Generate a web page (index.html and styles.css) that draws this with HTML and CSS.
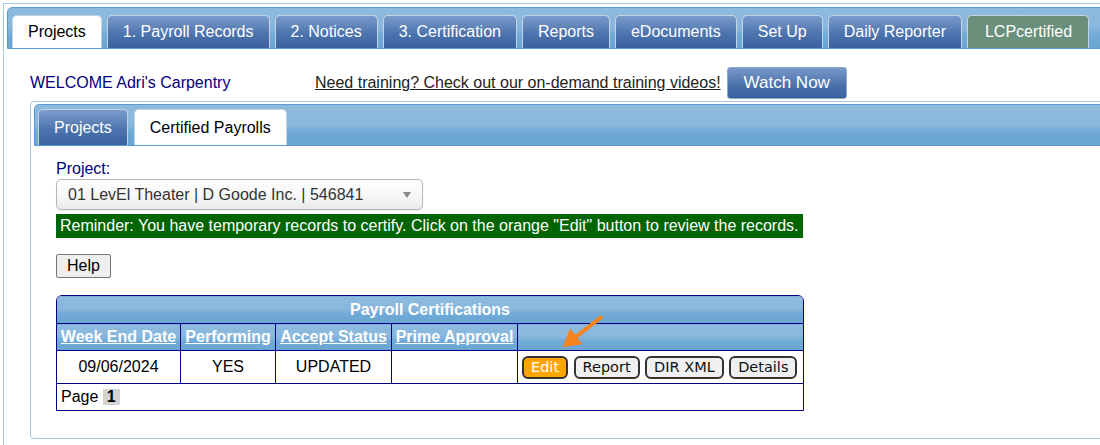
FILE: index.html
```html
<!DOCTYPE html>
<html lang="en">

<head>
  <meta charset="UTF-8">
  <meta name="viewport" content="width=device-width, initial-scale=1.0">
  <title>Certified Payrolls</title>

  <link rel="stylesheet" href="styles.css">
</head>

<body>
  <div class="frame">
    <ul class="tabs main-tabs">
      <li class="tab active">Projects</li>
      <li class="tab">1. Payroll Records</li>
      <li class="tab">2. Notices</li>
      <li class="tab">3. Certification</li>
      <li class="tab">Reports</li>
      <li class="tab">eDocuments</li>
      <li class="tab">Set Up</li>
      <li class="tab">Daily Reporter</li>
      <li class="tab lcp">LCPcertified</li>
    </ul>

    <div class="welcome">
      <span class="greet">WELCOME Adri's Carpentry</span>
      <a href="#" class="training">Need training? Check out our on-demand training videos!</a>
      <button type="button" class="watch">Watch Now</button>
    </div>

    <div class="panel">
      <ul class="tabs sub-tabs">
        <li class="tab">Projects</li>
        <li class="tab active">Certified Payrolls</li>
      </ul>

      <div class="panel-body">
        <label class="field-label" for="project">Project:</label>
        <div class="select-wrap">
          <select id="project">
            <option>01 LevEl Theater | D Goode Inc. | 546841</option>
          </select>
        </div>

        <div class="reminder">
          <span>Reminder: You have temporary records to certify. Click on the orange "Edit" button to review the records.</span>
        </div>

        <button type="button" class="help">Help</button>

        <div class="cert">
          <div class="grid">
            <table>
              <colgroup>
                <col style="width: 124px">
                <col style="width: 95px">
                <col style="width: 116px">
                <col style="width: 126px">
                <col>
              </colgroup>
              <tr class="caption-row">
                <th colspan="5">Payroll Certifications</th>
              </tr>
              <tr class="head-row">
                <th scope="col"><a href="#">Week End Date</a></th>
                <th scope="col"><a href="#">Performing</a></th>
                <th scope="col"><a href="#">Accept Status</a></th>
                <th scope="col"><a href="#">Prime Approval</a></th>
                <th scope="col"></th>
              </tr>
              <tr class="data-row">
                <td>09/06/2024</td>
                <td>YES</td>
                <td>UPDATED</td>
                <td></td>
                <td class="acts">
                  <button type="button" class="act edit">Edit</button>
                  <button type="button" class="act">Report</button>
                  <button type="button" class="act">DIR XML</button>
                  <button type="button" class="act">Details</button>
                </td>
              </tr>
              <tr class="pager-row">
                <td colspan="5">Page <span class="cur">1</span></td>
              </tr>
            </table>
          </div>

          <!-- orange pointer onto the Edit button -->
          <svg class="pointer" width="50" height="40" viewBox="0 0 50 40">
            <line x1="44.7" y1="4.6" x2="19" y2="24.5" stroke="#f5841f" stroke-width="4" stroke-linecap="round" />
            <polygon points="6.7,34.3 14,15.6 26.3,31.3" fill="#f5841f" />
          </svg>
        </div>
      </div>
    </div>
  </div>
</body>

</html>
```

FILE: styles.css
```css
* {
  box-sizing: border-box;
}

body {
  margin: 0;
  font-family: "Liberation Sans", Arial, sans-serif;
  font-size: 16px;
  background: #fff;
  overflow: hidden;
}

.frame {
  margin: 3px 0 0 3px;
  width: 1130px;
  min-height: 460px;
  padding: 3px;
  border: 1px solid #a8c7e3;
}

/* tab strips */
.tabs {
  list-style: none;
  margin: 0;
  display: flex;
  align-items: flex-end;
  border: 1px solid #5c9bd1;
  border-radius: 5px 0 0 0;
  background: linear-gradient(180deg, #8dbbdf 0%, #89b7dd 48%, #70aad6 68%, #69a5d3 100%);
}

.main-tabs {
  height: 42px;
  padding: 7px 4px 0;
  gap: 5px;
}

.sub-tabs {
  height: 42px;
  padding: 4px 3px 0;
  gap: 6px;
}

.tab {
  padding: 0 15px;
  line-height: 32px;
  white-space: nowrap;
  color: #fff;
  border: 1px solid #c3d3e4;
  border-bottom: 0;
  border-radius: 5px 5px 0 0;
  background: linear-gradient(180deg, #7b9ccb 0%, #4e74ae 55%, #3a62a0 100%);
}

.main-tabs .tab.lcp {
  padding: 0 16px 0 17px;
}

.sub-tabs .tab {
  line-height: 35px;
}

.tab.active {
  color: #000;
  background: #fff;
}

.tab.lcp {
  background: #6a8f7b;
}

/* welcome line */
.welcome {
  display: flex;
  align-items: center;
  height: 52px;
  padding: 18px 0 2px 23px;
}

.greet {
  flex: none;
  width: 285px;
  color: #000080;
}

.training {
  color: #222;
}

.watch {
  margin-left: 6px;
  height: 32px;
  padding: 0 16px;
  font-family: "Liberation Sans", Arial, sans-serif;
  font-size: 17px;
  color: #fff;
  border: 1px solid #8ea7c8;
  border-radius: 3px;
  background: linear-gradient(180deg, #7898c8 0%, #4a70ab 60%, #3a62a0 100%);
}

/* inner panel */
.panel {
  margin-left: 23px;
  padding: 2px 3px 0;
  border: 1px solid #a8c7e3;
  border-radius: 4px;
}

.panel-body {
  padding: 14px 0 27px 22px;
}

.field-label {
  display: block;
  line-height: 18px;
  color: #000080;
}

.select-wrap {
  position: relative;
  width: 367px;
  height: 31px;
  margin-top: 1px;
}

.select-wrap select {
  width: 100%;
  height: 100%;
  padding-left: 11px;
  appearance: none;
  -webkit-appearance: none;
  font-family: "Liberation Sans", Arial, sans-serif;
  font-size: 16px;
  color: #333;
  border: 1px solid #b5b5b5;
  border-radius: 5px;
  background: linear-gradient(180deg, #fff 0%, #f6f6f6 60%, #e9e9e9 100%);
  box-shadow: 0 1px 1px rgba(0, 0, 0, 0.08);
}

.select-wrap::after {
  content: "";
  position: absolute;
  right: 12px;
  top: 13px;
  border-left: 4px solid transparent;
  border-right: 4px solid transparent;
  border-top: 6px solid #888;
}

.reminder {
  margin-top: 4px;
}

.reminder span {
  display: inline-block;
  padding: 0 4px;
  line-height: 24px;
  color: #fff;
  background: #006400;
}

.help {
  display: block;
  margin-top: 16px;
  height: 24px;
  padding: 0 10px;
  font-family: "Liberation Sans", Arial, sans-serif;
  font-size: 16px;
  color: #000;
  background: #efefef;
  border: 1px solid #767676;
  border-radius: 2px;
}

/* certifications grid */
.cert {
  position: relative;
  width: 748px;
  margin-top: 17px;
}

.grid {
  border: 1px solid #000080;
  border-radius: 6px 6px 0 0;
  overflow: hidden;
}

.grid table {
  width: calc(100% + 2px);
  margin: -1px;
  border-collapse: collapse;
  table-layout: fixed;
}

.grid th,
.grid td {
  padding: 0 3px;
  border: 1px solid #000080;
  text-align: center;
  white-space: nowrap;
}

.grid th {
  color: #fff;
  font-weight: bold;
  background: linear-gradient(180deg, #8dbbdf 0%, #89b7dd 45%, #70aad6 65%, #69a5d3 100%);
}

.grid th a {
  color: #fff;
}

.caption-row th {
  height: 28px;
}

.head-row th {
  height: 27px;
}

.data-row td {
  height: 33px;
}

.pager-row td {
  height: 27px;
  padding-left: 4px;
  text-align: left;
}

.cur {
  display: inline-block;
  padding: 0 4px;
  line-height: 16px;
  font-weight: bold;
  background: #d3d3d3;
}

.grid td.acts {
  padding-left: 4px;
  text-align: left;
}

.act {
  height: 23px;
  margin-right: 1px;
  padding: 0 7px;
  line-height: 19px;
  vertical-align: middle;
  font-family: "DejaVu Sans", Verdana, sans-serif;
  font-size: 14.5px;
  color: #111;
  background: #f0f0f0;
  border: 2px solid #333;
  border-radius: 6px;
}

.act.edit {
  color: #fff;
  background: #ffa500;
}

.pointer {
  position: absolute;
  left: 500px;
  top: 18px;
}
```
